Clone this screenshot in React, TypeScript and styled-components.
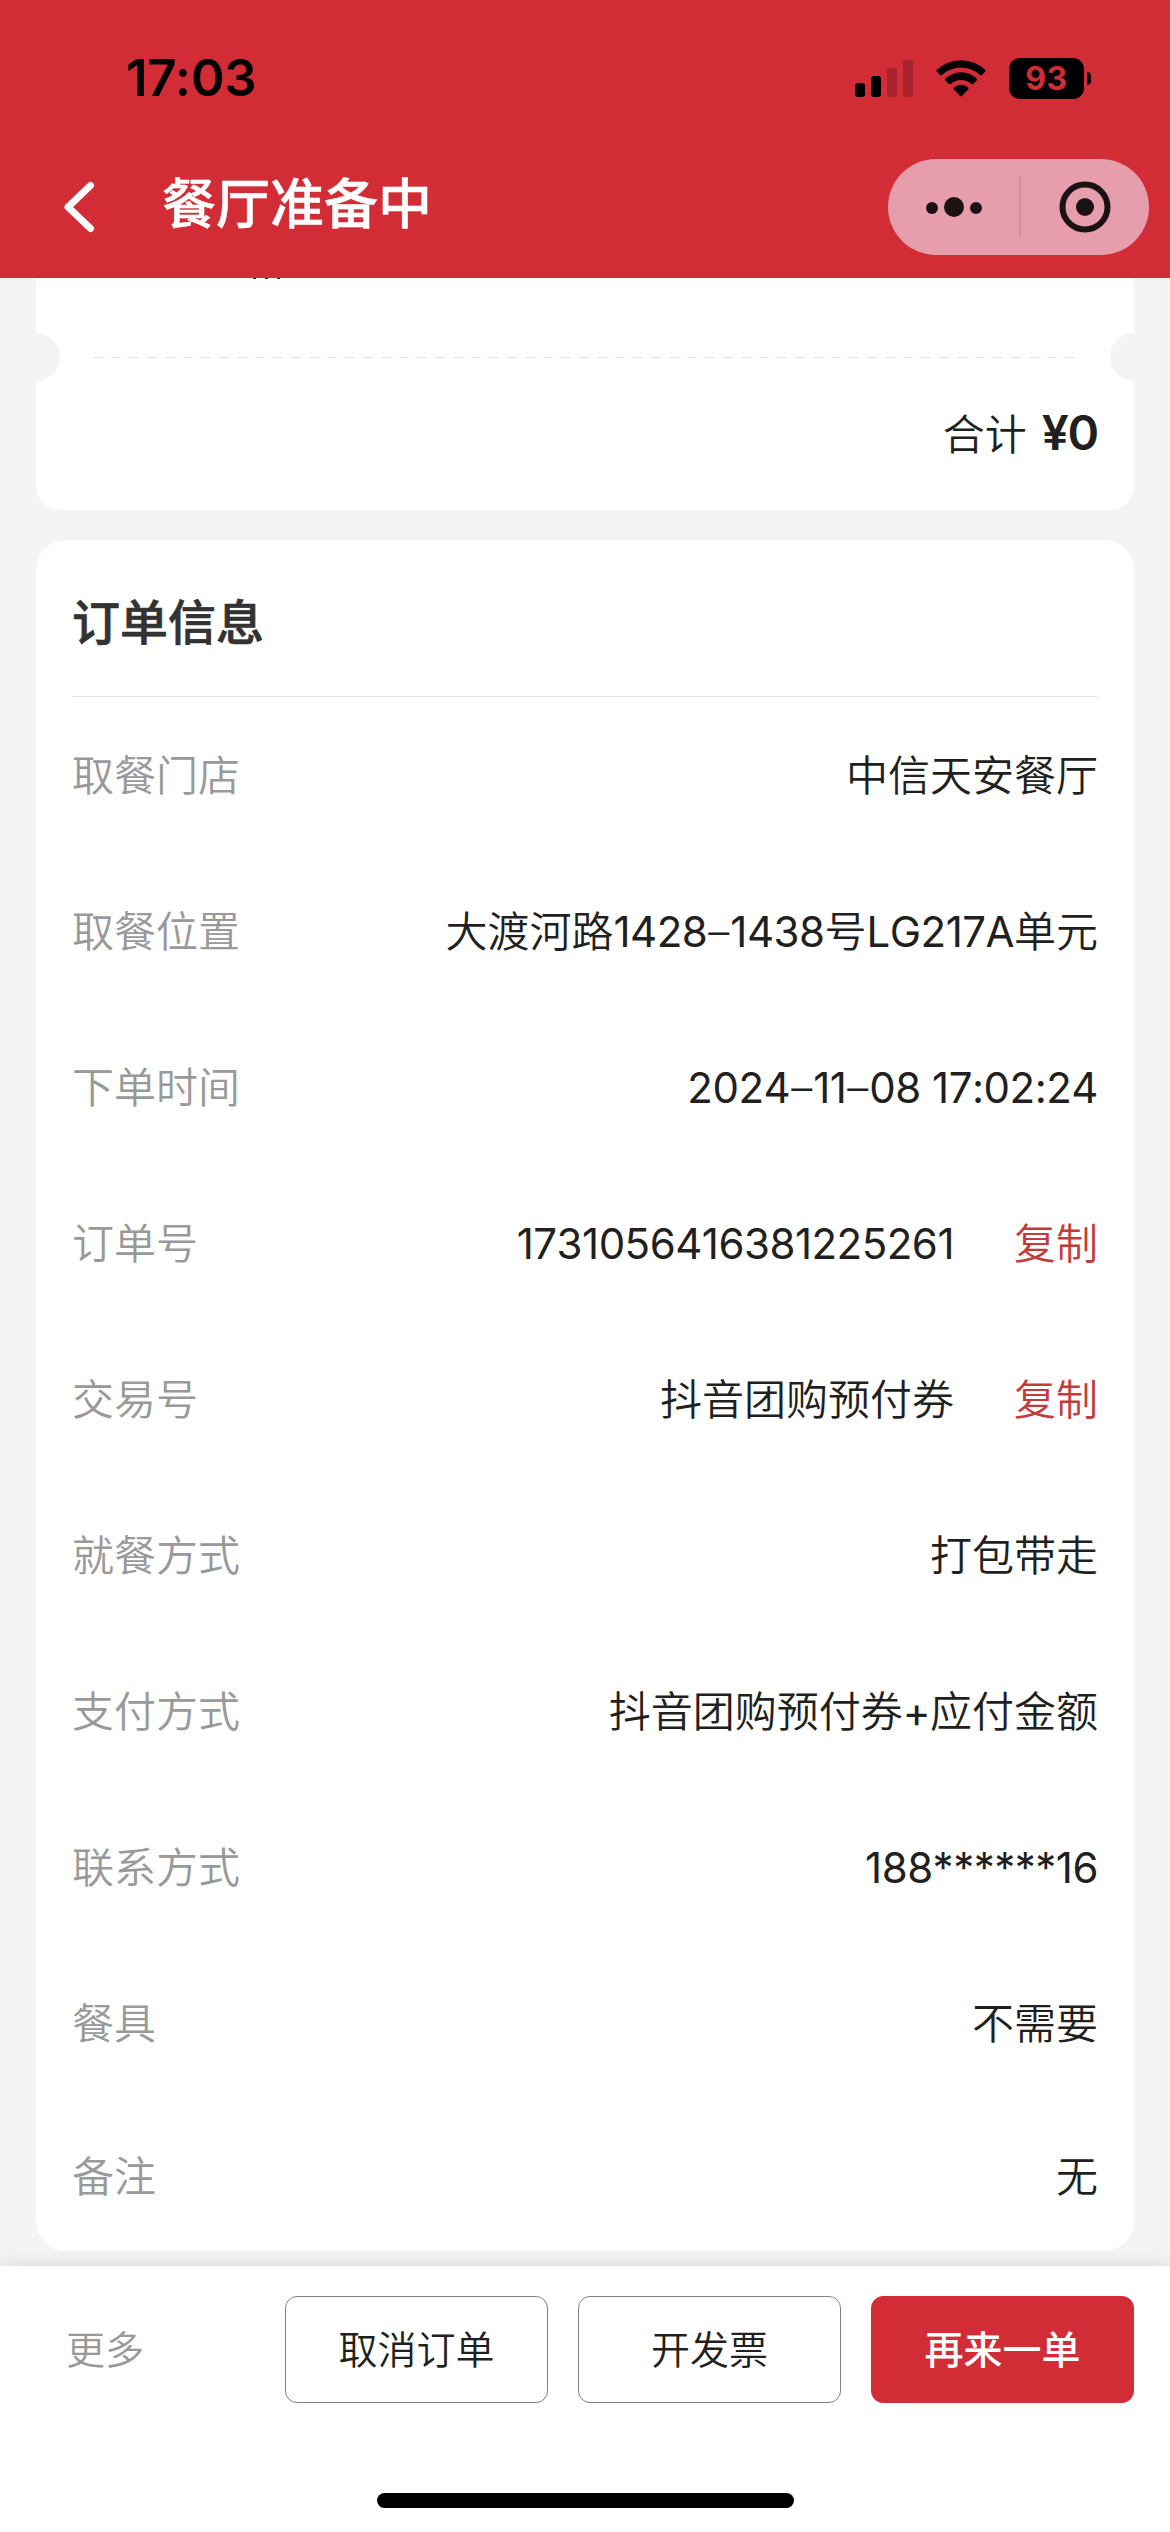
import React from 'react';
import styled, { createGlobalStyle } from 'styled-components';

const GlobalStyle = createGlobalStyle`
  * { box-sizing: border-box; }
  body {
    margin: 0;
    background: #f4f4f4;
    font-family: Inter, 'Noto Sans CJK SC', sans-serif;
    font-weight: 350;
    color: #221f20;
  }
  button { font: inherit; color: inherit; background: none; border: 0; padding: 0; }
`;

const Screen = styled.div`
  width: 1170px;
  height: 2532px;
  display: flex;
  flex-direction: column;
  overflow: hidden;
  background: #f4f4f4;
`;

const Header = styled.header`
  height: 278px;
  flex: none;
  display: flex;
  flex-direction: column;
  background: #d22c37;
`;

const StatusBar = styled.div`
  height: 135px;
  padding: 21px 79px 0 126px;
  display: flex;
  align-items: center;
  justify-content: space-between;
`;

const Clock = styled.span`
  font-size: 51px;
  font-weight: 600;
  line-height: 60px;
  letter-spacing: -0.2px;
  color: #000;
`;

const StatusIcons = styled.div`
  display: flex;
  align-items: center;
  gap: 23px;
`;

const Signal = styled.div`
  display: flex;
  align-items: flex-end;
  gap: 6px;
  height: 37px;
`;

const SignalBar = styled.i<{ $h: number; $off?: boolean }>`
  width: 10px;
  height: ${(p) => p.$h}px;
  border-radius: 3px;
  background: ${(p) => (p.$off ? '#a8232c' : '#000')};
`;

const Battery = styled.div`
  display: flex;
  align-items: center;
  gap: 3px;
`;

const BatteryBody = styled.div`
  width: 75px;
  height: 41px;
  border-radius: 11px;
  background: #000;
  color: #d22c37;
  font-size: 32px;
  font-weight: 700;
  line-height: 42px;
  letter-spacing: 0.5px;
  text-align: center;
`;

const BatteryCap = styled.i`
  width: 4px;
  height: 13px;
  border-radius: 0 5px 5px 0;
  background: #000;
`;

const NavBar = styled.div`
  height: 143px;
  padding: 0 21px 0 63px;
  display: flex;
  align-items: center;
`;

const Title = styled.h1`
  flex: 1;
  margin: 0 0 3px 67px;
  font-size: 54px;
  font-weight: 500;
  -webkit-text-stroke: 0.5px #fff;
  line-height: 72px;
  color: #fff;
`;

const Capsule = styled.div`
  width: 261px;
  height: 96px;
  border-radius: 48px;
  background: #e69eac;
  display: flex;
  align-items: center;
`;

const CapsuleButton = styled.button`
  flex: 1;
  height: 96px;
  display: flex;
  align-items: center;
  justify-content: center;
  &:first-child { padding-left: 2px; }
`;

const CapsuleDivider = styled.i`
  width: 2px;
  height: 60px;
  background: #d08d9a;
`;

const Content = styled.main`
  flex: 1;
  min-height: 0;
  padding: 0 36px;
  display: flex;
  flex-direction: column;
  gap: 30px;
`;

const SummaryCard = styled.section`
  height: 232px;
  flex: none;
  background: #fff;
  border-radius: 0 0 24px 24px;
  overflow: hidden;
  display: flex;
  flex-direction: column;
`;

const ItemTail = styled.div`
  height: 55px;
  padding-left: 217px;
  display: flex;
  gap: 9px;
`;

const TailStroke = styled.i`
  width: 3px;
  height: 1px;
  background: #2a1517;
`;

const Perforation = styled.div`
  height: 48px;
  display: flex;
  align-items: center;
  justify-content: space-between;
`;

const Notch = styled.i<{ $right?: boolean }>`
  width: 24px;
  height: 48px;
  background: #f4f4f4;
  border-radius: ${(p) => (p.$right ? '24px 0 0 24px' : '0 24px 24px 0')};
`;

const Dashes = styled.i`
  width: 985px;
  height: 1px;
  background: repeating-linear-gradient(90deg, #e4e4e4 0 10px, transparent 10px 18px);
`;

const Total = styled.div`
  flex: 1;
  padding: 20px 36px 0 0;
  display: flex;
  align-items: baseline;
  justify-content: flex-end;
  gap: 15px;
  font-size: 42px;
  line-height: 64px;
`;

const Amount = styled.strong`
  font-size: 48px;
  font-weight: 600;
  letter-spacing: -1.2px;
`;

const InfoCard = styled.section`
  height: 1711px;
  flex: none;
  padding: 0 36px;
  background: #fff;
  border-radius: 30px;
`;

const InfoTitle = styled.h2`
  height: 157px;
  margin: 0;
  padding: 9px 0 0;
  border-bottom: 1px solid #e6e6e6;
  font-size: 48px;
  font-weight: 500;
  -webkit-text-stroke: 0.7px #333;
  line-height: 148px;
  color: #333;
`;

const Row = styled.div`
  height: 156px;
  padding-top: 1px;
  display: flex;
  align-items: center;
  font-size: 42px;
  line-height: 60px;
  &:last-child { height: 150px; }
`;

const Label = styled.span`
  flex: 1;
  color: #999;
`;

const Value = styled.span`
  white-space: nowrap;
`;

const Digits = styled.span`
  font-weight: 400;
  letter-spacing: -0.5px;
  font-kerning: none;
`;

const Dash = styled.span`
  letter-spacing: 1px;
  margin-left: 1px;
`;

const Copy = styled.button`
  margin-left: 60px;
  color: #c23c3b;
`;

const Footer = styled.footer`
  height: 266px;
  flex: none;
  position: relative;
  padding: 30px 36px 24px;
  display: flex;
  flex-direction: column;
  justify-content: space-between;
  background: #fff;
  box-shadow: 0 0 18px rgba(0, 0, 0, 0.14);
`;

const Actions = styled.div`
  height: 107px;
  display: flex;
  align-items: center;
  gap: 30px;
  font-size: 39px;
`;

const More = styled.button`
  flex: 1;
  text-align: left;
  padding: 0 0 5px 30px;
  color: #999;
`;

const ActionButton = styled.button<{ $primary?: boolean }>`
  width: 263px;
  height: 107px;
  padding-bottom: 5px;
  border-radius: 12px;
  border: 1px solid ${(p) => (p.$primary ? '#d22c37' : '#808080')};
  background: ${(p) => (p.$primary ? '#d22c37' : '#fff')};
  color: ${(p) => (p.$primary ? '#fff' : '#221f20')};
  font-size: 39px;
  font-weight: ${(p) => (p.$primary ? 500 : 350)};
`;

const HomeIndicator = styled.i`
  align-self: center;
  width: 417px;
  height: 15px;
  border-radius: 8px;
  background: #000;
`;

const rows: { label: string; value: string; copy?: boolean }[] = [
  { label: '取餐门店', value: '中信天安餐厅' },
  { label: '取餐位置', value: '大渡河路1428–1438号LG217A单元' },
  { label: '下单时间', value: '2024–11–08 17:02:24' },
  { label: '订单号', value: '1731056416381225261', copy: true },
  { label: '交易号', value: '抖音团购预付券', copy: true },
  { label: '就餐方式', value: '打包带走' },
  { label: '支付方式', value: '抖音团购预付券+应付金额' },
  { label: '联系方式', value: '188******16' },
  { label: '餐具', value: '不需要' },
  { label: '备注', value: '无' },
];

const MixedText = ({ text }: { text: string }) => (
  <>
    {text.split(/([\x20-\x7e]+|–)/).filter(Boolean).map((part, i) => {
      if (part === '–') return <Dash key={i}>{part}</Dash>;
      return /^[\x20-\x7e]/.test(part) ? <Digits key={i}>{part}</Digits> : part;
    })}
  </>
);

const WifiIcon = () => (
  <svg width="50" height="37" viewBox="0 0 50 37">
    <path d="M0.8 9.9 Q0 10.8 0.8 11.7 L4.2 15.1 Q5 15.8 5.9 15 A28.4 28.4 0 0 1 44.1 15 Q45 15.8 45.8 15.1 L49.2 11.7 Q50 10.8 49.2 9.9 A35.2 35.2 0 0 0 0.8 9.9 Z" />
    <path d="M9.3 18.6 Q8.5 19.5 9.3 20.4 L12.8 23.9 Q13.7 24.7 14.6 23.9 A15.6 15.6 0 0 1 35.4 23.9 Q36.3 24.7 37.2 23.9 L40.7 20.4 Q41.5 19.5 40.7 18.6 A22.6 22.6 0 0 0 9.3 18.6 Z" />
    <path d="M17.9 27.6 Q17 28.5 17.9 29.4 L24.1 36 Q25 36.8 25.9 36 L32.1 29.4 Q33 28.5 32.1 27.6 A10.6 10.6 0 0 0 17.9 27.6 Z" />
  </svg>
);

export default function App() {
  return (
    <>
      <GlobalStyle />
      <Screen>
        <Header>
          <StatusBar>
            <Clock>17:03</Clock>
            <StatusIcons>
              <Signal>
                <SignalBar $h={14} />
                <SignalBar $h={21} />
                <SignalBar $h={29} $off />
                <SignalBar $h={37} $off />
              </Signal>
              <WifiIcon />
              <Battery>
                <BatteryBody>93</BatteryBody>
                <BatteryCap />
              </Battery>
            </StatusIcons>
          </StatusBar>
          <NavBar>
            <svg width="32" height="52" viewBox="0 0 32 52" fill="none" stroke="#fff" strokeWidth="7" strokeLinecap="round" strokeLinejoin="round">
              <path d="M27.5 4.5 L5 26 L27.5 47.5" />
            </svg>
            <Title>餐厅准备中</Title>
            <Capsule>
              <CapsuleButton aria-label="menu">
                <svg width="56" height="22" viewBox="0 0 56 22" fill="#1b1213">
                  <circle cx="6" cy="12" r="6" />
                  <circle cx="28" cy="11" r="10" />
                  <circle cx="50" cy="12" r="6" />
                </svg>
              </CapsuleButton>
              <CapsuleDivider />
              <CapsuleButton aria-label="close">
                <svg width="52" height="52" viewBox="0 0 52 52">
                  <circle cx="26" cy="26" r="22.5" fill="none" stroke="#1b1213" strokeWidth="6" />
                  <circle cx="26" cy="26" r="9" fill="#1b1213" />
                </svg>
              </CapsuleButton>
            </Capsule>
          </NavBar>
        </Header>
        <Content>
          <SummaryCard>
            <ItemTail>
              <TailStroke />
              <TailStroke />
              <TailStroke />
            </ItemTail>
            <Perforation>
              <Notch />
              <Dashes />
              <Notch $right />
            </Perforation>
            <Total>
              <span>合计</span>
              <Amount>¥0</Amount>
            </Total>
          </SummaryCard>
          <InfoCard>
            <InfoTitle>订单信息</InfoTitle>
            {rows.map((r) => (
              <Row key={r.label}>
                <Label>{r.label}</Label>
                <Value><MixedText text={r.value} /></Value>
                {r.copy && <Copy>复制</Copy>}
              </Row>
            ))}
          </InfoCard>
        </Content>
        <Footer>
          <Actions>
            <More>更多</More>
            <ActionButton>取消订单</ActionButton>
            <ActionButton>开发票</ActionButton>
            <ActionButton $primary>再来一单</ActionButton>
          </Actions>
          <HomeIndicator />
        </Footer>
      </Screen>
    </>
  );
}
